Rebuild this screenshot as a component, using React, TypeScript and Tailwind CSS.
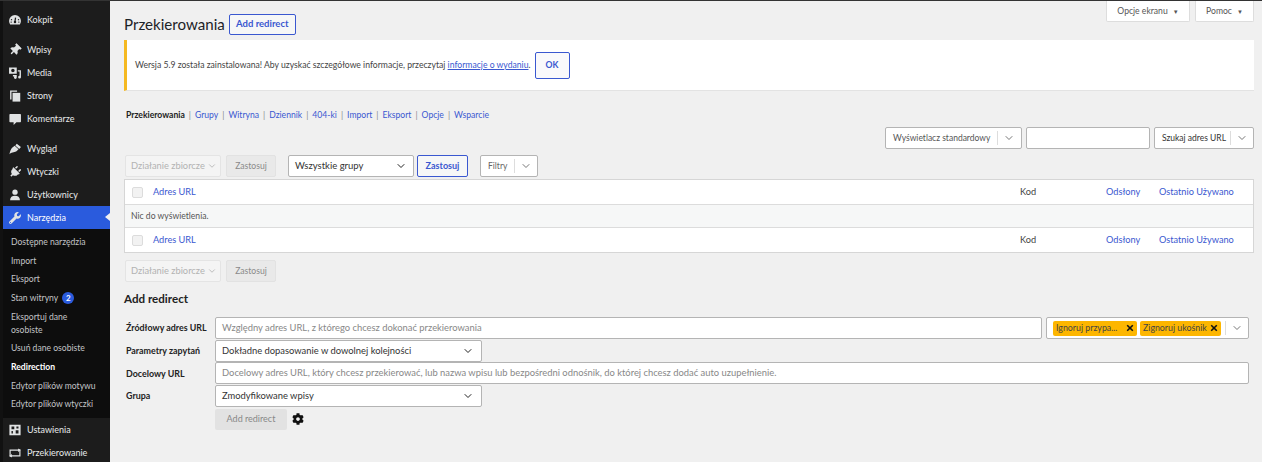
import { FaThumbtack, FaPlug, FaWrench, FaCog } from "react-icons/fa";
import { LuChevronDown } from "react-icons/lu";
import { ReactNode } from "react";

const font = "[font-family:'Lato','Open_Sans',sans-serif]";

function Glyph({ children }: { children: ReactNode }) {
  return (
    <svg viewBox="0 0 20 20" className="w-[14px] h-[14px]" fill="currentColor">
      {children}
    </svg>
  );
}

const icons = {
  dashboard: (
    <Glyph>
      <path d="M10 3a8.5 8.5 0 0 0-8.5 8.5c0 1.800.6 3.400 1.600 4.800h13.800a8.500 8.500 0 0 0 1.600-4.800A8.500 8.500 0 0 0 10 3z" />
      <path d="M10.800 6.500 10 12" stroke="#1c1c1c" strokeWidth="1.800" />
      <circle cx="10" cy="13" r="1.800" fill="#1c1c1c" />
      <circle cx="5" cy="9.500" r="1" fill="#1c1c1c" />
      <circle cx="15" cy="9.500" r="1" fill="#1c1c1c" />
      <circle cx="4.500" cy="13" r="1" fill="#1c1c1c" />
      <circle cx="15.500" cy="13" r="1" fill="#1c1c1c" />
    </Glyph>
  ),
  media: (
    <Glyph>
      <path fillRule="evenodd" d="M1.500 2h11v9h-11zM7 4a2.500 2.500 0 1 0 0 5 2.500 2.500 0 0 0 0-5z" />
      <path d="M14 6h4.500v10a2 2 0 1 1-2-2V8H14zM7 13h5.500v3.500a2 2 0 1 1-2-2V15H7z" />
    </Glyph>
  ),
  pages: (
    <Glyph>
      <path d="M3 2h10v2H5v11H3z" />
      <path d="M6.500 5.500H17.500V18H6.500z" />
    </Glyph>
  ),
  comment: (
    <Glyph>
      <path d="M3 3h14.500a1 1 0 0 1 1 1v9.500a1 1 0 0 1-1 1H12l-4 4v-4H3a1 1 0 0 1-1-1V4a1 1 0 0 1 1-1z" />
    </Glyph>
  ),
  brush: (
    <Glyph>
      <path d="M12.500 2.500l6 4.500-2.500 3-5.500-5zM9.500 5.500l5.500 5-2.500 2.500c-2.500 2-6 1-10.500 4.500 1-4.500 2-7 3.500-9z" />
    </Glyph>
  ),
  user: (
    <Glyph>
      <circle cx="10" cy="6" r="3.800" />
      <path d="M3 17.500c0-4.500 2.800-6.500 7-6.500s7 2 7 6.500z" />
    </Glyph>
  ),
  settings: (
    <Glyph>
      <path fillRule="evenodd" d="M2 2.500h16v15H2zM5 5v4h4V5zM12 5v3h3V5zM5 11.500V15h2v-3.500zM11 10.500V15h4v-4.500z" />
    </Glyph>
  ),
  redirect: (
    <Glyph>
      <path d="M5.500 14.500H3V6h12" fill="none" stroke="currentColor" strokeWidth="1.700" />
      <path d="M14.500 3.500 18 6l-3.500 2.500z" />
      <path d="M14.500 5.500H17V14H5" fill="none" stroke="currentColor" strokeWidth="1.700" />
      <path d="M5.500 11.500 2 14l3.500 2.500z" />
    </Glyph>
  ),
};

function MenuItem({ icon, label, className = "" }: { icon: ReactNode; label: string; className?: string }) {
  return (
    <div className={`h-[23px] flex items-center pl-[4px] text-[#e8eaeb] text-[9px] whitespace-nowrap ${className}`}>
      <span className="w-[16px] flex justify-center text-[#e0e2e3] text-[12px]">{icon}</span>
      <span className="ml-[4px]">{label}</span>
    </div>
  );
}

function SubItem({ children, className = "" }: { children: ReactNode; className?: string }) {
  return <div className={`pl-[8px] pr-[4px] py-[3px] leading-[12.7px] text-[8.6px] text-[#c3c4c7] ${className}`}>{children}</div>;
}

function Sidebar() {
  return (
    <div className="w-[110px] shrink-0 bg-[#1c1c1c] border-l-[3px] border-[#111] pt-[7px] overflow-hidden">
      <MenuItem icon={icons.dashboard} label="Kokpit" />
      <div className="h-[7px]" />
      <MenuItem icon={<FaThumbtack className="rotate-45" />} label="Wpisy" />
      <MenuItem icon={icons.media} label="Media" />
      <MenuItem icon={icons.pages} label="Strony" />
      <MenuItem icon={icons.comment} label="Komentarze" />
      <div className="h-[7px]" />
      <MenuItem icon={icons.brush} label="Wygląd" />
      <MenuItem icon={<FaPlug className="rotate-45" />} label="Wtyczki" />
      <MenuItem icon={icons.user} label="Użytkownicy" />
      <div className="relative">
        <MenuItem icon={<FaWrench />} label="Narzędzia" className="bg-[#2a5bdd] !text-white" />
        <div className="absolute right-0 top-[7px] border-y-[4px] border-r-[5px] border-y-transparent border-r-[#f0f0f0]" />
      </div>
      <div className="bg-[#0d0d0d] pt-[4px] pb-[4px]">
        <SubItem>Dostępne narzędzia</SubItem>
        <SubItem>Import</SubItem>
        <SubItem>Eksport</SubItem>
        <SubItem>
          <span className="flex items-center gap-[4px]">
            Stan witryny
            <span className="w-[12px] h-[12px] rounded-full bg-[#2a5bdd] text-white text-[8px] font-bold flex items-center justify-center">2</span>
          </span>
        </SubItem>
        <SubItem>Eksportuj dane<br />osobiste</SubItem>
        <SubItem>Usuń dane osobiste</SubItem>
        <SubItem className="!text-white font-bold">Redirection</SubItem>
        <SubItem>Edytor plików motywu</SubItem>
        <SubItem>Edytor plików wtyczki</SubItem>
      </div>
      <MenuItem icon={icons.settings} label="Ustawienia" />
      <MenuItem icon={icons.redirect} label="Przekierowanie" />
    </div>
  );
}

function Caret({ divider = false }: { divider?: boolean }) {
  return (
    <span className={`flex items-center h-[14px] ${divider ? "border-l border-[#ddd] pl-[5px] text-[#777]" : "text-[#222]"}`}>
      <LuChevronDown className="w-[12px] h-[12px]" />
    </span>
  );
}

function Box({ className = "", children }: { className?: string; children?: ReactNode }) {
  return (
    <div className={`h-[22px] bg-white border border-[#b4b4b4] rounded-[2px] flex items-center justify-between text-[8.5px] text-[#333] whitespace-nowrap ${className}`}>
      {children}
    </div>
  );
}

function GhostButton() {
  return (
    <div className="w-[50px] h-[22px] flex items-center justify-center bg-[#e9e9e9] border border-[#e2e2e2] rounded-[2px] text-[8.6px] text-[#8a8a8a]">Zastosuj</div>
  );
}

function BulkSelect() {
  return (
    <div className="w-[96px] h-[22px] flex items-center justify-between pl-[5px] pr-[3px] bg-[#f4f4f4] border border-[#e4e4e4] rounded-[2px] text-[9.3px] text-[#b2b2b2] whitespace-nowrap">
      Działanie zbiorcze
      <LuChevronDown className="w-[10px] h-[10px]" />
    </div>
  );
}

function TableRow() {
  return (
    <div className="h-[24px] flex items-center bg-white text-[9.2px]">
      <span className="ml-[7px] w-[11px] h-[11px] bg-[#f2f2f2] border border-[#dcdcdc] rounded-[2px]" />
      <span className="ml-[10px] text-[#3a58d0]">Adres URL</span>
      <span className="ml-auto w-[86px] text-[#444]">Kod</span>
      <span className="w-[53px] text-[#3a58d0]">Odsłony</span>
      <span className="w-[94px] text-[#3a58d0]">Ostatnio Używano</span>
    </div>
  );
}

function Tag({ label, className }: { label: string; className: string }) {
  return (
    <span className={`h-[15px] flex items-center justify-between px-[3px] bg-[#fdb600] rounded-[2px] text-[8.8px] text-[#444] ${className}`}>
      {label}
      <svg viewBox="0 0 10 10" className="w-[8px] h-[8px]" stroke="#111" strokeWidth="2">
        <path d="M1.500 1.500l7 7M8.500 1.500l-7 7" />
      </svg>
    </span>
  );
}

const tabs = ["Grupy", "Witryna", "Dziennik", "404-ki", "Import", "Eksport", "Opcje", "Wsparcie"];

export default function App() {
  return (
    <div className={`w-[1262px] h-[462px] flex overflow-hidden bg-[#f0f0f0] border-t border-[#333] ${font}`}>
      <Sidebar />
      <div className="flex-1 pl-[14px] pr-[8px] min-w-0">
        <div className="flex justify-between h-[39px]">
          <div className="flex items-start pt-[13px] gap-[4px]">
            <h1 className="text-[15.1px] leading-[21px] text-[#1d2327]">Przekierowania</h1>
            <div className="w-[67px] h-[21px] flex items-center justify-center bg-[#f6f7f7] border border-[#3a58d0] rounded-[2px] text-[9.5px] font-bold text-[#3a58d0]">Add redirect</div>
          </div>
          <div className="flex items-start gap-[5px] text-[8.6px] text-[#555]">
            <div className="w-[84px] h-[21px] flex items-center justify-center gap-[5px] bg-white border border-[#ddd] border-t-0 rounded-b-[2px]">Opcje ekranu <span className="text-[6px]">▼</span></div>
            <div className="w-[59px] h-[21px] flex items-center justify-center gap-[5px] bg-white border border-[#ddd] border-t-0 rounded-b-[2px]">Pomoc <span className="text-[6px]">▼</span></div>
          </div>
        </div>

        <div className="h-[51px] flex items-center gap-[4px] bg-white border-l-[3px] border-[#f5b921] border-b border-b-[#e3e3e3] pl-[8px] text-[8.65px] text-[#444]">
          <span>
            Wersja 5.9 została zainstalowana! Aby uzyskać szczegółowe informacje, przeczytaj <span className="text-[#3a58d0] underline">informacje o wydaniu</span>.
          </span>
          <div className="w-[35px] h-[27px] flex items-center justify-center border border-[#3a58d0] rounded-[2px] bg-[#f9f9fb] font-bold text-[#3a58d0]">OK</div>
        </div>

        <div className="mt-[18px] flex items-center pl-[2px] text-[8.6px] h-[13px] text-[#3a58d0]">
          <span className="font-bold text-[#222]">Przekierowania</span>
          {tabs.map((t) => (
            <span key={t} className="flex">
              <span className="mx-[4px] text-[#888]">|</span>
              {t}
            </span>
          ))}
        </div>

        <div className="mt-[5px] flex justify-end gap-[4px]">
          <Box className="w-[137px] pl-[7px] pr-[6px] text-[#555]">Wyświetlacz standardowy<Caret divider /></Box>
          <Box className="w-[124px]" />
          <Box className="w-[100px] pl-[7px] pr-[5px]">Szukaj adres URL<Caret divider /></Box>
        </div>

        <div className="mt-[6px] flex items-center pl-[1px]">
          <BulkSelect />
          <div className="w-[5px]" />
          <GhostButton />
          <Box className="ml-[12px] w-[126px] pl-[6px] pr-[6px] !text-[9.5px]">Wszystkie grupy<Caret /></Box>
          <div className="ml-[3px] w-[51px] h-[22px] flex items-center justify-center bg-[#f6f7f7] border border-[#3a58d0] rounded-[2px] text-[9px] font-bold text-[#3a58d0]">Zastosuj</div>
          <Box className="ml-[12px] w-[58px] pl-[7px] pr-[5px] text-[#666]">Filtry<Caret divider /></Box>
        </div>

        <div className="mt-[2px] border border-[#d6d6d6] bg-white">
          <TableRow />
          <div className="h-[24px] flex items-center pl-[6px] bg-[#f6f7f7] border-y border-[#dcdcdc] text-[8.6px] text-[#555]">Nic do wyświetlenia.</div>
          <TableRow />
        </div>

        <div className="mt-[7px] flex items-center pl-[1px]">
          <BulkSelect />
          <div className="w-[5px]" />
          <GhostButton />
        </div>

        <h2 className="mt-[9px] text-[11.6px] leading-[16px] font-bold text-[#222]">Add redirect</h2>

        <div className="mt-[10px] grid grid-cols-[89px_1fr] gap-y-[0.67px] pl-[2px] pr-[5px] items-center text-[8.9px]">
          <label className="font-bold text-[#222] whitespace-nowrap">Źródłowy adres URL</label>
          <div className="flex gap-[4px]">
            <Box className="flex-1 px-[6px] !text-[9.4px] !text-[#888]">Względny adres URL, z którego chcesz dokonać przekierowania</Box>
            <Box className="w-[203px] pl-[6px] pr-[5px]">
              <span className="flex gap-[3px]">
                <Tag label="Ignoruj przypa..." className="w-[84px]" />
                <Tag label="Zignoruj ukośnik" className="w-[81px]" />
              </span>
              <Caret divider />
            </Box>
          </div>
          <label className="font-bold text-[#222]">Parametry zapytań</label>
          <Box className="w-[267px] pl-[6px] pr-[7px] !text-[9.4px]">Dokładne dopasowanie w dowolnej kolejności<Caret /></Box>
          <label className="font-bold text-[#222]">Docelowy URL</label>
          <Box className="px-[6px] !text-[9.4px] !text-[#888]">Docelowy adres URL, który chcesz przekierować, lub nazwa wpisu lub bezpośredni odnośnik, do której chcesz dodać auto uzupełnienie.</Box>
          <label className="font-bold text-[#222]">Grupa</label>
          <Box className="w-[267px] pl-[6px] pr-[7px] !text-[9.4px]">Zmodyfikowane wpisy<Caret /></Box>
          <span />
          <div className="mt-[1px] flex items-center gap-[5px]">
            <div className="w-[72px] h-[21px] flex items-center justify-center bg-[#e2e2e2] rounded-[2px] text-[9px] text-[#888]">Add redirect</div>
            <FaCog className="w-[12px] h-[12px] text-[#111]" />
          </div>
        </div>
      </div>
    </div>
  );
}
